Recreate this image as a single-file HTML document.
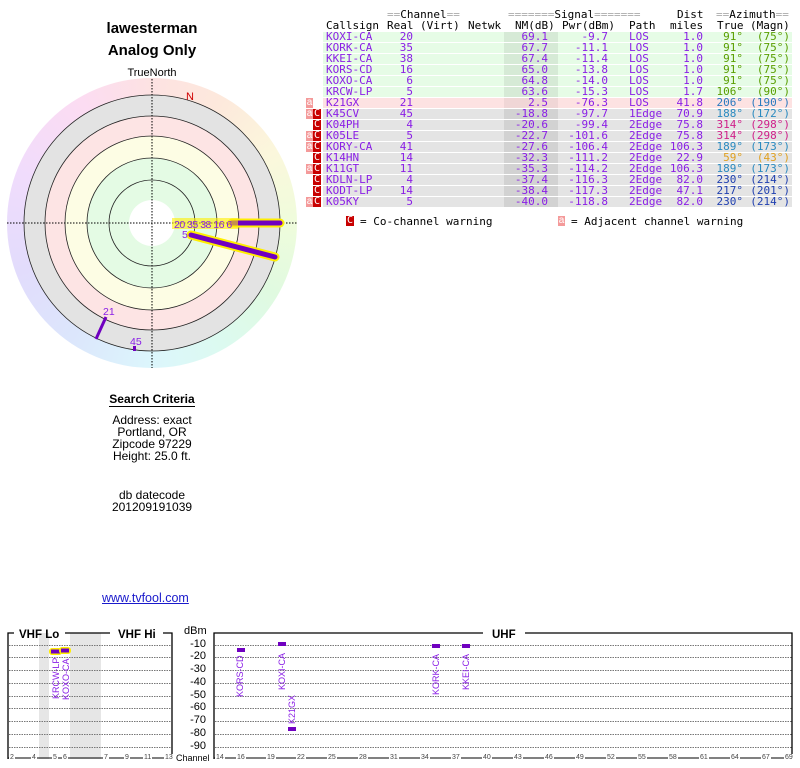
<!DOCTYPE html>
<html><head><meta charset="utf-8"><style>
body{margin:0;width:800px;height:768px;position:relative;background:#fff;font-family:"Liberation Sans",sans-serif;overflow:hidden}
.a{position:absolute;white-space:nowrap}
.m{font-family:"DejaVu Sans Mono","Liberation Mono",monospace;font-size:11px;line-height:11px}
.h{position:absolute;white-space:nowrap;font-family:"DejaVu Sans Mono","Liberation Mono",monospace;font-size:11px;line-height:11px;color:#000}
.h i{font-style:normal;color:#aaa}
.row{position:absolute;left:323px;width:469px;height:10px}
.row span{position:absolute;top:0;line-height:10px;color:#8a1ee6}
.c0{left:3px}
.c1{right:379px}
.c2{right:244px}
.c3{right:184px}
.c4{left:306px}
.c5{right:89px}
.c6{right:49px}
.c7{right:2px}
.nm{position:absolute;left:181px;width:54px;top:0;height:10px}
.g{background:#e6fce6}.g .nm{background:#d6ead6}
.p{background:#fde2e2}.p .nm{background:#f0d6d6}
.k{background:#e4e4e4}.k .nm{background:#d2d2d2}
.wa{position:absolute;left:306px;width:7px;height:10px;background:#f49a9a;color:#fff;font-size:10px;line-height:9px;text-align:center;font-family:"Liberation Sans",sans-serif}
.wc{position:absolute;left:313px;width:8px;height:10px;background:#c80000;color:#fff;font-size:10px;line-height:10px;text-align:center;font-family:"DejaVu Sans Mono",monospace}
.ctr{position:absolute;left:52px;width:200px;text-align:center;font-size:12px;line-height:12px;color:#000}
.tk{position:absolute;font-size:7px;color:#444;top:754px;background:#fff;padding:0 1px}
.vl{position:absolute;font-size:9px;color:#8a1ee6;transform:rotate(-90deg);transform-origin:left top;white-space:nowrap;font-family:"Liberation Sans",sans-serif}
.dl{position:absolute;font-size:11px;left:180px;width:26px;text-align:right;color:#000}
</style></head><body>

<div class="a" style="left:52px;width:200px;text-align:center;top:20px;font-weight:bold;font-size:15px">lawesterman</div>
<div class="a" style="left:52px;width:200px;text-align:center;top:42px;font-weight:bold;font-size:15px">Analog Only</div>
<div class="a" style="left:52px;width:200px;text-align:center;top:67px;font-size:11px">TrueNorth</div>

<div class="a" style="left:7px;top:78px;width:290px;height:290px;border-radius:50%;background:conic-gradient(from 0deg,#fde2e2,#fde9dc 30deg,#fbf7dc 60deg,#effcdc 90deg,#e0fae0 120deg,#dcfaf0 150deg,#dcf6fc 180deg,#dce6fc 215deg,#e2dcfc 250deg,#f0dcfc 290deg,#fcdcf2 330deg,#fde2e2)"></div>
<svg class="a" style="left:0;top:0" width="310" height="380">
<circle cx="152" cy="223" r="128" fill="#e3e3e3" stroke="#222" stroke-width="0.8"/>
<circle cx="152" cy="223" r="107" fill="#fde4e4" stroke="#222" stroke-width="0.8"/>
<circle cx="152" cy="223" r="87" fill="#fdfde4" stroke="#222" stroke-width="0.8"/>
<circle cx="152" cy="223" r="65" fill="#e4fbe4" stroke="#222" stroke-width="0.8"/>
<circle cx="152" cy="223" r="43" fill="#e4fbe4" stroke="#222" stroke-width="0.8"/>
<circle cx="152" cy="223" r="23" fill="#fff"/>
<line x1="152" y1="79" x2="152" y2="368" stroke="#000" stroke-width="1" stroke-dasharray="1.5 1.5"/>
<line x1="7" y1="223" x2="297" y2="223" stroke="#000" stroke-width="1" stroke-dasharray="1.5 1.5"/>
<text x="186" y="100" fill="#d00000" font-size="11" font-family="Liberation Sans">N</text>
<line x1="232" y1="223" x2="280" y2="223" stroke="#ffee00" stroke-width="9" stroke-linecap="round"/>
<line x1="232" y1="223" x2="280" y2="223" stroke="#7000c0" stroke-width="5" stroke-linecap="round"/>
<line x1="191" y1="235" x2="275" y2="257" stroke="#ffee00" stroke-width="9" stroke-linecap="round"/>
<line x1="191" y1="235" x2="275" y2="257" stroke="#7000c0" stroke-width="5" stroke-linecap="round"/>
<rect x="172" y="218" width="66" height="11" fill="#ffee00" opacity="0.6"/>
<text x="174" y="228" fill="#8a1ee6" font-size="10.5" font-family="Liberation Sans" letter-spacing="-0.5">20 35 38 16  6</text>
<text x="182" y="238" fill="#8a1ee6" font-size="10.5" font-family="Liberation Sans">5</text>
<line x1="106" y1="317" x2="96" y2="339" stroke="#7000c0" stroke-width="3"/>
<text x="103" y="315" fill="#8a1ee6" font-size="10.5" font-family="Liberation Sans">21</text>
<rect x="133" y="346" width="3" height="5" fill="#7000c0"/>
<text x="130" y="345" fill="#8a1ee6" font-size="10.5" font-family="Liberation Sans">45</text>
</svg>

<div class="a" style="left:52px;width:200px;text-align:center;top:392px;font-weight:bold;font-size:12px"><span style="border-bottom:1px solid #000">Search Criteria</span></div>
<div class="ctr" style="top:414px">Address: exact</div>
<div class="ctr" style="top:426px">Portland, OR</div>
<div class="ctr" style="top:438px">Zipcode 97229</div>
<div class="ctr" style="top:450px">Height: 25.0 ft.</div>
<div class="ctr" style="top:489px">db datecode</div>
<div class="ctr" style="top:501px">201209191039</div>
<div class="a" style="left:102px;top:591px;font-size:12.5px;color:#1a1acc;text-decoration:underline">www.tvfool.com</div>

<!-- table headers -->
<div class="h" style="left:387px;top:9px"><i>==</i>Channel<i>==</i></div>
<div class="h" style="left:508px;top:9px"><i>=======</i>Signal<i>=======</i></div>
<div class="h" style="left:677px;top:9px">Dist</div>
<div class="h" style="left:716px;top:9px"><i>==</i>Azimuth<i>==</i></div>
<div class="h" style="left:326px;top:20px">Callsign</div>
<div class="h" style="left:387px;top:20px">Real</div>
<div class="h" style="left:420px;top:20px">(Virt)</div>
<div class="h" style="left:468px;top:20px">Netwk</div>
<div class="h" style="left:515px;top:20px">NM(dB)</div>
<div class="h" style="left:562px;top:20px">Pwr(dBm)</div>
<div class="h" style="left:629px;top:20px">Path</div>
<div class="h" style="left:670px;top:20px">miles</div>
<div class="h" style="left:717px;top:20px">True</div>
<div class="h" style="left:750px;top:20px">(Magn)</div>

<div class="m">
<div class="row g" style="top:32px"><div class="nm"></div><span class="c0">KOXI-CA</span><span class="c1">20</span><span class="c2">69.1</span><span class="c3">-9.7</span><span class="c4">LOS</span><span class="c5">1.0</span><span class="c6" style="color:#5a9e00">91°</span><span class="c7" style="color:#5a9e00">(75°)</span></div>
<div class="row g" style="top:43px"><div class="nm"></div><span class="c0">KORK-CA</span><span class="c1">35</span><span class="c2">67.7</span><span class="c3">-11.1</span><span class="c4">LOS</span><span class="c5">1.0</span><span class="c6" style="color:#5a9e00">91°</span><span class="c7" style="color:#5a9e00">(75°)</span></div>
<div class="row g" style="top:54px"><div class="nm"></div><span class="c0">KKEI-CA</span><span class="c1">38</span><span class="c2">67.4</span><span class="c3">-11.4</span><span class="c4">LOS</span><span class="c5">1.0</span><span class="c6" style="color:#5a9e00">91°</span><span class="c7" style="color:#5a9e00">(75°)</span></div>
<div class="row g" style="top:65px"><div class="nm"></div><span class="c0">KORS-CD</span><span class="c1">16</span><span class="c2">65.0</span><span class="c3">-13.8</span><span class="c4">LOS</span><span class="c5">1.0</span><span class="c6" style="color:#5a9e00">91°</span><span class="c7" style="color:#5a9e00">(75°)</span></div>
<div class="row g" style="top:76px"><div class="nm"></div><span class="c0">KOXO-CA</span><span class="c1">6</span><span class="c2">64.8</span><span class="c3">-14.0</span><span class="c4">LOS</span><span class="c5">1.0</span><span class="c6" style="color:#5a9e00">91°</span><span class="c7" style="color:#5a9e00">(75°)</span></div>
<div class="row g" style="top:87px"><div class="nm"></div><span class="c0">KRCW-LP</span><span class="c1">5</span><span class="c2">63.6</span><span class="c3">-15.3</span><span class="c4">LOS</span><span class="c5">1.7</span><span class="c6" style="color:#5a9e00">106°</span><span class="c7" style="color:#5a9e00">(90°)</span></div>
<div class="row p" style="top:98px"><div class="nm"></div><span class="c0">K21GX</span><span class="c1">21</span><span class="c2">2.5</span><span class="c3">-76.3</span><span class="c4">LOS</span><span class="c5">41.8</span><span class="c6" style="color:#2a7ac0">206°</span><span class="c7" style="color:#2a7ac0">(190°)</span></div>
<div class="row k" style="top:109px"><div class="nm"></div><span class="c0">K45CV</span><span class="c1">45</span><span class="c2">-18.8</span><span class="c3">-97.7</span><span class="c4">1Edge</span><span class="c5">70.9</span><span class="c6" style="color:#2a8ac0">188°</span><span class="c7" style="color:#2a8ac0">(172°)</span></div>
<div class="row k" style="top:120px"><div class="nm"></div><span class="c0">K04PH</span><span class="c1">4</span><span class="c2">-20.6</span><span class="c3">-99.4</span><span class="c4">2Edge</span><span class="c5">75.8</span><span class="c6" style="color:#d0208a">314°</span><span class="c7" style="color:#d0208a">(298°)</span></div>
<div class="row k" style="top:131px"><div class="nm"></div><span class="c0">K05LE</span><span class="c1">5</span><span class="c2">-22.7</span><span class="c3">-101.6</span><span class="c4">2Edge</span><span class="c5">75.8</span><span class="c6" style="color:#d0208a">314°</span><span class="c7" style="color:#d0208a">(298°)</span></div>
<div class="row k" style="top:142px"><div class="nm"></div><span class="c0">KORY-CA</span><span class="c1">41</span><span class="c2">-27.6</span><span class="c3">-106.4</span><span class="c4">2Edge</span><span class="c5">106.3</span><span class="c6" style="color:#2a8ac0">189°</span><span class="c7" style="color:#2a8ac0">(173°)</span></div>
<div class="row k" style="top:153px"><div class="nm"></div><span class="c0">K14HN</span><span class="c1">14</span><span class="c2">-32.3</span><span class="c3">-111.2</span><span class="c4">2Edge</span><span class="c5">22.9</span><span class="c6" style="color:#e0a020">59°</span><span class="c7" style="color:#e0a020">(43°)</span></div>
<div class="row k" style="top:164px"><div class="nm"></div><span class="c0">K11GT</span><span class="c1">11</span><span class="c2">-35.3</span><span class="c3">-114.2</span><span class="c4">2Edge</span><span class="c5">106.3</span><span class="c6" style="color:#2a8ac0">189°</span><span class="c7" style="color:#2a8ac0">(173°)</span></div>
<div class="row k" style="top:175px"><div class="nm"></div><span class="c0">KDLN-LP</span><span class="c1">4</span><span class="c2">-37.4</span><span class="c3">-116.3</span><span class="c4">2Edge</span><span class="c5">82.0</span><span class="c6" style="color:#2040b0">230°</span><span class="c7" style="color:#2040b0">(214°)</span></div>
<div class="row k" style="top:186px"><div class="nm"></div><span class="c0">KODT-LP</span><span class="c1">14</span><span class="c2">-38.4</span><span class="c3">-117.3</span><span class="c4">2Edge</span><span class="c5">47.1</span><span class="c6" style="color:#2040b0">217°</span><span class="c7" style="color:#2040b0">(201°)</span></div>
<div class="row k" style="top:197px"><div class="nm"></div><span class="c0">K05KY</span><span class="c1">5</span><span class="c2">-40.0</span><span class="c3">-118.8</span><span class="c4">2Edge</span><span class="c5">82.0</span><span class="c6" style="color:#2040b0">230°</span><span class="c7" style="color:#2040b0">(214°)</span></div>
</div>

<!-- warnings -->
<div class="wa" style="top:98px">a</div>
<div class="wa" style="top:109px">a</div><div class="wc" style="top:109px">C</div>
<div class="wc" style="top:120px">C</div>
<div class="wa" style="top:131px">a</div><div class="wc" style="top:131px">C</div>
<div class="wa" style="top:142px">a</div><div class="wc" style="top:142px">C</div>
<div class="wc" style="top:153px">C</div>
<div class="wa" style="top:164px">a</div><div class="wc" style="top:164px">C</div>
<div class="wc" style="top:175px">C</div>
<div class="wc" style="top:186px">C</div>
<div class="wa" style="top:197px">a</div><div class="wc" style="top:197px">C</div>
<div class="wc" style="top:216px;left:346px">C</div>
<div class="a m" style="left:360px;top:216px;color:#000">= Co-channel warning</div>
<div class="wa" style="top:216px;left:558px">a</div>
<div class="a m" style="left:571px;top:216px;color:#000">= Adjacent channel warning</div>

<!-- bottom chart -->
<svg class="a" style="left:0;top:620px" width="800" height="148">
<rect x="39" y="13" width="10" height="126" fill="#e6e6e6"/>
<rect x="70" y="13" width="31" height="126" fill="#e6e6e6"/>
<g stroke="#777" stroke-width="1" stroke-dasharray="1.5 1">
<path d="M9 25.5H172M9 37.5H172M9 50.5H172M9 63.5H172M9 76.5H172M9 88.5H172M9 101.5H172M9 114.5H172M9 127.5H172"/>
<path d="M215 25.5H792M215 37.5H792M215 50.5H792M215 63.5H792M215 76.5H792M215 88.5H792M215 101.5H792M215 114.5H792M215 127.5H792"/>
</g>
<g stroke="#000" stroke-width="1.3" fill="none">
<path d="M8 139V13H14M65 13H110M163 13H172V139"/>
<path d="M214 139V13H483M525 13H792V139"/>
</g>
<g stroke="#000" stroke-width="1"><path d="M8 138H172M214 138H792"/></g>
<text x="19" y="18" font-size="11.5" font-weight="bold" font-family="Liberation Sans">VHF Lo</text>
<text x="118" y="18" font-size="11.5" font-weight="bold" font-family="Liberation Sans">VHF Hi</text>
<text x="492" y="18" font-size="11.5" font-weight="bold" font-family="Liberation Sans">UHF</text>
<rect x="49" y="28" width="13" height="7" rx="3" fill="#ffee00"/><rect x="51" y="29.5" width="9" height="4" fill="#7000c0"/>
<rect x="59" y="27" width="12" height="7" rx="3" fill="#ffee00"/><rect x="61" y="28.5" width="8" height="4" fill="#7000c0"/>
<rect x="237" y="28" width="8" height="4" fill="#7000c0"/>
<rect x="278" y="22" width="8" height="4" fill="#7000c0"/>
<rect x="288" y="107" width="8" height="4" fill="#7000c0"/>
<rect x="432" y="24" width="8" height="4" fill="#7000c0"/>
<rect x="462" y="24" width="8" height="4" fill="#7000c0"/>
</svg>
<div class="vl" style="left:51px;top:699px">KRCW-LP</div>
<div class="vl" style="left:61px;top:700px">KOXO-CA</div>
<div class="vl" style="left:235px;top:697px">KORS-CD</div>
<div class="vl" style="left:277px;top:690px">KOXI-CA</div>
<div class="vl" style="left:287px;top:724px">K21GX</div>
<div class="vl" style="left:431px;top:695px">KORK-CA</div>
<div class="vl" style="left:461px;top:690px">KKEI-CA</div>

<div class="a" style="left:184px;top:625px;font-size:11px">dBm</div>
<div class="dl" style="top:638px">-10</div>
<div class="dl" style="top:650px">-20</div>
<div class="dl" style="top:663px">-30</div>
<div class="dl" style="top:676px">-40</div>
<div class="dl" style="top:689px">-50</div>
<div class="dl" style="top:701px">-60</div>
<div class="dl" style="top:714px">-70</div>
<div class="dl" style="top:727px">-80</div>
<div class="dl" style="top:740px">-90</div>
<div class="a" style="left:176px;top:753px;font-size:9px">Channel</div>

<div class="tk" style="left:9px">2</div><div class="tk" style="left:31px">4</div><div class="tk" style="left:52px">5</div><div class="tk" style="left:62px">6</div><div class="tk" style="left:103px">7</div><div class="tk" style="left:124px">9</div><div class="tk" style="left:143px">11</div><div class="tk" style="left:164px">13</div>
<div class="tk" style="left:215px">14</div><div class="tk" style="left:236px">16</div><div class="tk" style="left:266px">19</div><div class="tk" style="left:296px">22</div><div class="tk" style="left:327px">25</div><div class="tk" style="left:358px">28</div><div class="tk" style="left:389px">31</div><div class="tk" style="left:420px">34</div><div class="tk" style="left:451px">37</div><div class="tk" style="left:482px">40</div><div class="tk" style="left:513px">43</div><div class="tk" style="left:544px">46</div><div class="tk" style="left:575px">49</div><div class="tk" style="left:606px">52</div><div class="tk" style="left:637px">55</div><div class="tk" style="left:668px">58</div><div class="tk" style="left:699px">61</div><div class="tk" style="left:730px">64</div><div class="tk" style="left:761px">67</div><div class="tk" style="left:784px">69</div>
</body></html>
